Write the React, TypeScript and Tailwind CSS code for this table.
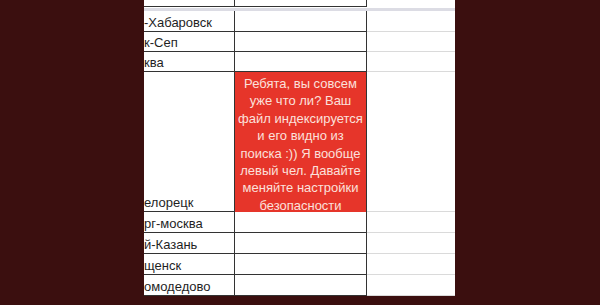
const rows = [
  { h: "h-[21px]", name: "-Хабаровск" },
  { h: "h-[20px]", name: "к-Сеп" },
  { h: "h-[20px]", name: "ква" },
  { h: "h-[140px]", name: "елорецк", note: true },
  { h: "h-[21px]", name: "рг-москва" },
  { h: "h-[21px]", name: "й-Казань" },
  { h: "h-[21px]", name: "щенск" },
  { h: "h-[21px]", name: "омодедово" },
];

const noteLines = [
  "Ребята, вы совсем",
  "уже что ли? Ваш",
  "файл индексируется",
  "и его видно из",
  "поиска :)) Я вообще",
  "левый чел. Давайте",
  "меняйте настройки",
  "безопасности",
];

export default function App() {
  return (
    <div className="w-[600px] h-[305px] bg-[#3b0f0f] overflow-hidden">
      <div
        className="ml-[144px] w-[311px] h-[296px] bg-white flex flex-col text-[13px] text-[#1f1f1f]"
        style={{ fontFamily: '"Liberation Sans", Arial, sans-serif' }}
      >
        {/* partial top row */}
        <div className="flex h-[7px]">
          <div className="w-[90px] border-b border-[#333]" />
          <div className="w-[133px] border-x border-b border-[#333]" />
          <div className="w-[88px]" />
        </div>
        {/* frozen pane divider */}
        <div className="h-[4px] border-t border-white bg-[#dcdce4]" />

        {rows.map((r) => (
          <div key={r.name} className={`flex ${r.h}`}>
            <div className="w-[90px] border-b border-[#333] flex items-end overflow-hidden whitespace-nowrap leading-[16px]">
              {r.name}
            </div>
            {r.note ? (
              <div className="w-[133px] border-x border-[#333] bg-[#e6352a] text-[#fbe0dc] text-center leading-[17.4px] pt-[3px] overflow-hidden">
                {noteLines.map((l) => (
                  <div key={l} className="whitespace-nowrap">
                    {l}
                  </div>
                ))}
              </div>
            ) : (
              <div className="w-[133px] border-x border-b border-[#333]" />
            )}
            <div className="w-[88px] border-b border-[#dadada]" />
          </div>
        ))}
      </div>
    </div>
  );
}
